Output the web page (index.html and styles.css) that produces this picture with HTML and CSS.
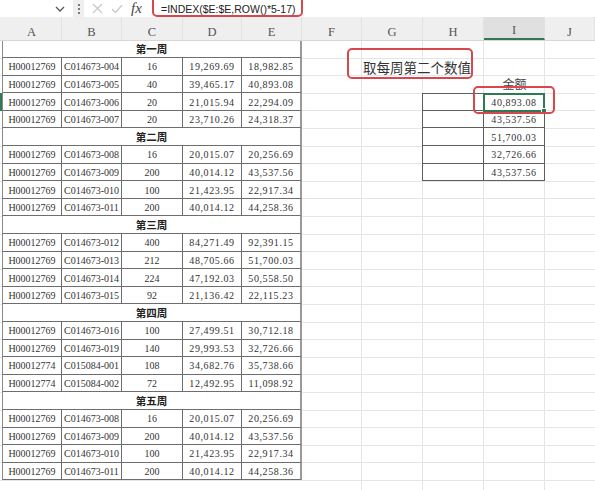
FILE: index.html
```html
<!DOCTYPE html>
<html lang="zh-CN">
<head>
<meta charset="utf-8">
<title>INDEX 取每周第二个数值</title>
<link rel="stylesheet" href="styles.css">
</head>
<body>
<div class="toolbar">
  <svg class="chev" width="10" height="6" viewBox="0 0 10 6"><path d="M1 1 L5 5 L9 1" fill="none" stroke="#555" stroke-width="1.3"/></svg>
  <div class="dots"><span></span><span></span><span></span></div>
  <svg class="ico-x" width="11" height="11" viewBox="0 0 11 11"><path d="M1 1 L10 10 M10 1 L1 10" stroke="#c9c9c9" stroke-width="1.3" fill="none"/></svg>
  <svg class="ico-ok" width="12" height="10" viewBox="0 0 12 10"><path d="M1 5 L4.5 8.5 L11 1" stroke="#c9c9c9" stroke-width="1.3" fill="none"/></svg>
  <span class="fx">fx</span>
  <div class="formula">=INDEX($E:$E,ROW()*5-17)</div>
</div>

<div class="colhead">
  <div class="hc corner"></div>
  <div class="hc">A</div><div class="hc">B</div><div class="hc">C</div><div class="hc">D</div><div class="hc">E</div>
  <div class="hc">F</div><div class="hc">G</div><div class="hc">H</div><div class="hc sel">I</div><div class="hc">J</div>
</div>

<div class="body">
  <div class="wk">第一周</div>
  <div class="a">H00012769</div><div class="c">C014673-004</div><div class="c">16</div><div class="c n">19,269.69</div><div class="c e n">18,982.85</div>
  <div class="a">H00012769</div><div class="c">C014673-005</div><div class="c">40</div><div class="c n">39,465.17</div><div class="c e n">40,893.08</div>
  <div class="a">H00012769</div><div class="c">C014673-006</div><div class="c">20</div><div class="c n">21,015.94</div><div class="c e n">22,294.09</div>
  <div class="a">H00012769</div><div class="c">C014673-007</div><div class="c">20</div><div class="c n">23,710.26</div><div class="c e n">24,318.37</div>

  <div class="wk">第二周</div>
  <div class="a">H00012769</div><div class="c">C014673-008</div><div class="c">16</div><div class="c n">20,015.07</div><div class="c e n">20,256.69</div>
  <div class="a">H00012769</div><div class="c">C014673-009</div><div class="c">200</div><div class="c n">40,014.12</div><div class="c e n">43,537.56</div>
  <div class="a">H00012769</div><div class="c">C014673-010</div><div class="c">100</div><div class="c n">21,423.95</div><div class="c e n">22,917.34</div>
  <div class="a">H00012769</div><div class="c">C014673-011</div><div class="c">200</div><div class="c n">40,014.12</div><div class="c e n">44,258.36</div>

  <div class="wk">第三周</div>
  <div class="a">H00012769</div><div class="c">C014673-012</div><div class="c">400</div><div class="c n">84,271.49</div><div class="c e n">92,391.15</div>
  <div class="a">H00012769</div><div class="c">C014673-013</div><div class="c">212</div><div class="c n">48,705.66</div><div class="c e n">51,700.03</div>
  <div class="a">H00012769</div><div class="c">C014673-014</div><div class="c">224</div><div class="c n">47,192.03</div><div class="c e n">50,558.50</div>
  <div class="a">H00012769</div><div class="c">C014673-015</div><div class="c">92</div><div class="c n">21,136.42</div><div class="c e n">22,115.23</div>

  <div class="wk">第四周</div>
  <div class="a">H00012769</div><div class="c">C014673-016</div><div class="c">100</div><div class="c n">27,499.51</div><div class="c e n">30,712.18</div>
  <div class="a">H00012769</div><div class="c">C014673-019</div><div class="c">140</div><div class="c n">29,993.53</div><div class="c e n">32,726.66</div>
  <div class="a">H00012774</div><div class="c">C015084-001</div><div class="c">108</div><div class="c n">34,682.76</div><div class="c e n">35,738.66</div>
  <div class="a">H00012774</div><div class="c">C015084-002</div><div class="c">72</div><div class="c n">12,492.95</div><div class="c e n">11,098.92</div>

  <div class="wk">第五周</div>
  <div class="a">H00012769</div><div class="c">C014673-008</div><div class="c">16</div><div class="c n">20,015.07</div><div class="c e n">20,256.69</div>
  <div class="a">H00012769</div><div class="c">C014673-009</div><div class="c">200</div><div class="c n">40,014.12</div><div class="c e n">43,537.56</div>
  <div class="a">H00012769</div><div class="c">C014673-010</div><div class="c">100</div><div class="c n">21,423.95</div><div class="c e n">22,917.34</div>
  <div class="a">H00012769</div><div class="c">C014673-011</div><div class="c">200</div><div class="c n">40,014.12</div><div class="c e n">44,258.36</div>

  <!-- result block H3:I8 -->
  <div class="label r3">金额</div>
  <div class="mh r4 top"></div><div class="mi r4 top n">40,893.08</div>
  <div class="mh r5"></div><div class="mi r5 n">43,537.56</div>
  <div class="mh r6"></div><div class="mi r6 n">51,700.03</div>
  <div class="mh r7"></div><div class="mi r7 n">32,726.66</div>
  <div class="mh r8"></div><div class="mi r8 n">43,537.56</div>
  <div class="rowmark r4"></div>

  <!-- overlays -->
  <div class="note"><span>取每周第二个数值</span></div>
  <div class="selcell"><i></i></div>
  <div class="hl"></div>
</div>
</body>
</html>
```

FILE: styles.css
```css
html, body {
  margin: 0;
  padding: 0;
  background: #fff;
  overflow: hidden;
}
body {
  width: 595px;
  height: 490px;
  font-family: "Liberation Serif", "Noto Sans CJK SC", serif;
  color: #333;
}

/* ---------- toolbar / formula bar ---------- */
.toolbar {
  display: flex;
  align-items: center;
  height: 17px;
  padding-left: 55px;
  background: #fff;
}
.chev { margin-top: 1px; }
.dots {
  margin-left: 8px;
  width: 11px;
  height: 17px;
  background: #efefef;
  display: flex;
  flex-direction: column;
  align-items: center;
  justify-content: center;
  gap: 2px;
}
.dots span {
  width: 2px;
  height: 2px;
  border-radius: 1px;
  background: #555;
}
.ico-x { margin-left: 8px; }
.ico-ok { margin-left: 8px; }
.fx {
  margin-left: 8px;
  width: 15px;
  font-family: "Liberation Serif", serif;
  font-style: italic;
  font-size: 15px;
  line-height: 17px;
  color: #444;
}
.formula {
  align-self: flex-start;
  margin-top: -4px;
  margin-left: 6px;
  width: 151px;
  height: 21px;
  box-sizing: border-box;
  border: 2px solid #d8474e;
  border-radius: 5px;
  padding: 5px 0 0 7px;
  font-family: "Liberation Sans", "Noto Sans", sans-serif;
  font-size: 10.5px;
  line-height: 12px;
  color: #222;
  white-space: nowrap;
}

/* ---------- grid columns ---------- */
.colhead, .body {
  display: grid;
  grid-template-columns: 2px 60px 60px 61px 59px 60px 60px 61px 61px 61px 50px;
}

/* ---------- column header ---------- */
.colhead {
  height: 23.5px;
  background: #efefef;
  border-bottom: 1px solid #d6d6d6;
  box-sizing: border-box;
}
.hc {
  display: flex;
  align-items: flex-end;
  justify-content: center;
  padding-bottom: 0;
  box-sizing: border-box;
  border-right: 1px solid #e2e2e2;
  font-family: "Liberation Serif", serif;
  font-size: 12.5px;
  line-height: 15px;
  color: #555;
}
.hc.corner { border-right: 0; }
.hc.sel {
  background: #e0e0e0;
  border-bottom: 2px solid #2f7a55;
}

/* ---------- sheet body ---------- */
.body {
  position: relative;
  grid-auto-rows: 17.6px;
  height: 450px;
  align-content: start;
  background:
    linear-gradient(#e5e5e5, #e5e5e5) 361px 0 / 1px 100% no-repeat,
    linear-gradient(#e5e5e5, #e5e5e5) 422px 0 / 1px 100% no-repeat,
    linear-gradient(#e5e5e5, #e5e5e5) 483px 0 / 1px 100% no-repeat,
    linear-gradient(#e5e5e5, #e5e5e5) 544px 0 / 1px 100% no-repeat,
    repeating-linear-gradient(to bottom, transparent 0, transparent 16.6px, #e5e5e5 16.6px, #e5e5e5 17.6px);
}

.a, .c, .wk, .mh, .mi, .label {
  box-sizing: border-box;
  display: flex;
  align-items: center;
  justify-content: center;
  white-space: nowrap;
  font-size: 10px;
  color: #333;
  background: #fff;
}
.a, .c {
  border-right: 1px solid #6e6e6e;
  border-bottom: 1px solid #6e6e6e;
  padding-top: 1px;
}
.a {
  grid-column: 2;
  border-left: 1px solid #8a8a8a;
}
.c.e {
  border-right: 2px solid #9a9a9a;
}
.n { letter-spacing: 0.6px; }

.wk {
  grid-column: 2 / span 5;
  border-left: 1px solid #8a8a8a;
  border-right: 2px solid #9a9a9a;
  border-bottom: 1px solid #6e6e6e;
  font-family: "Noto Sans CJK SC", sans-serif;
  font-weight: 700;
  font-size: 10.5px;
  color: #222;
}

/* result block */
.r3 { grid-row: 3; }
.r4 { grid-row: 4; }
.r5 { grid-row: 5; }
.r6 { grid-row: 6; }
.r7 { grid-row: 7; }
.r8 { grid-row: 8; }

.label {
  grid-column: 10;
  background: transparent;
  align-items: flex-end;
  padding-bottom: 1px;
  font-family: "Noto Sans CJK SC", sans-serif;
  font-size: 12px;
  color: #444;
}
.mh, .mi {
  border-right: 1px solid #5e5e5e;
  border-bottom: 1px solid #5e5e5e;
}
.mh {
  grid-column: 9;
  border-left: 1px solid #5e5e5e;
  margin-left: -1px;
}
.mi {
  grid-column: 10;
  padding-top: 1px;
}
.top { border-top: 1px solid #5e5e5e; }

.rowmark {
  grid-column: 1;
  background: #2f7a55;
}

/* overlays */
.note {
  position: absolute;
  left: 347px;
  top: 7px;
  width: 126px;
  height: 31px;
  box-sizing: border-box;
  border: 2px solid #d8474e;
  border-radius: 5px;
  padding: 9px 0 0 14px;
  white-space: nowrap;
  font-family: "Noto Sans CJK SC", sans-serif;
  font-size: 13.5px;
  line-height: 17px;
  color: #333;
}
.selcell {
  position: absolute;
  left: 483px;
  top: 52px;
  width: 62px;
  height: 19.6px;
  box-sizing: border-box;
  border: 2px solid #2f7a55;
}
.selcell i {
  position: absolute;
  right: -4px;
  bottom: -4px;
  width: 4px;
  height: 4px;
  background: #2f7a55;
  border: 1px solid #fff;
}
.hl {
  position: absolute;
  left: 473px;
  top: 45px;
  width: 82px;
  height: 28px;
  box-sizing: border-box;
  border: 2px solid #d8474e;
  border-radius: 5px;
}
```
